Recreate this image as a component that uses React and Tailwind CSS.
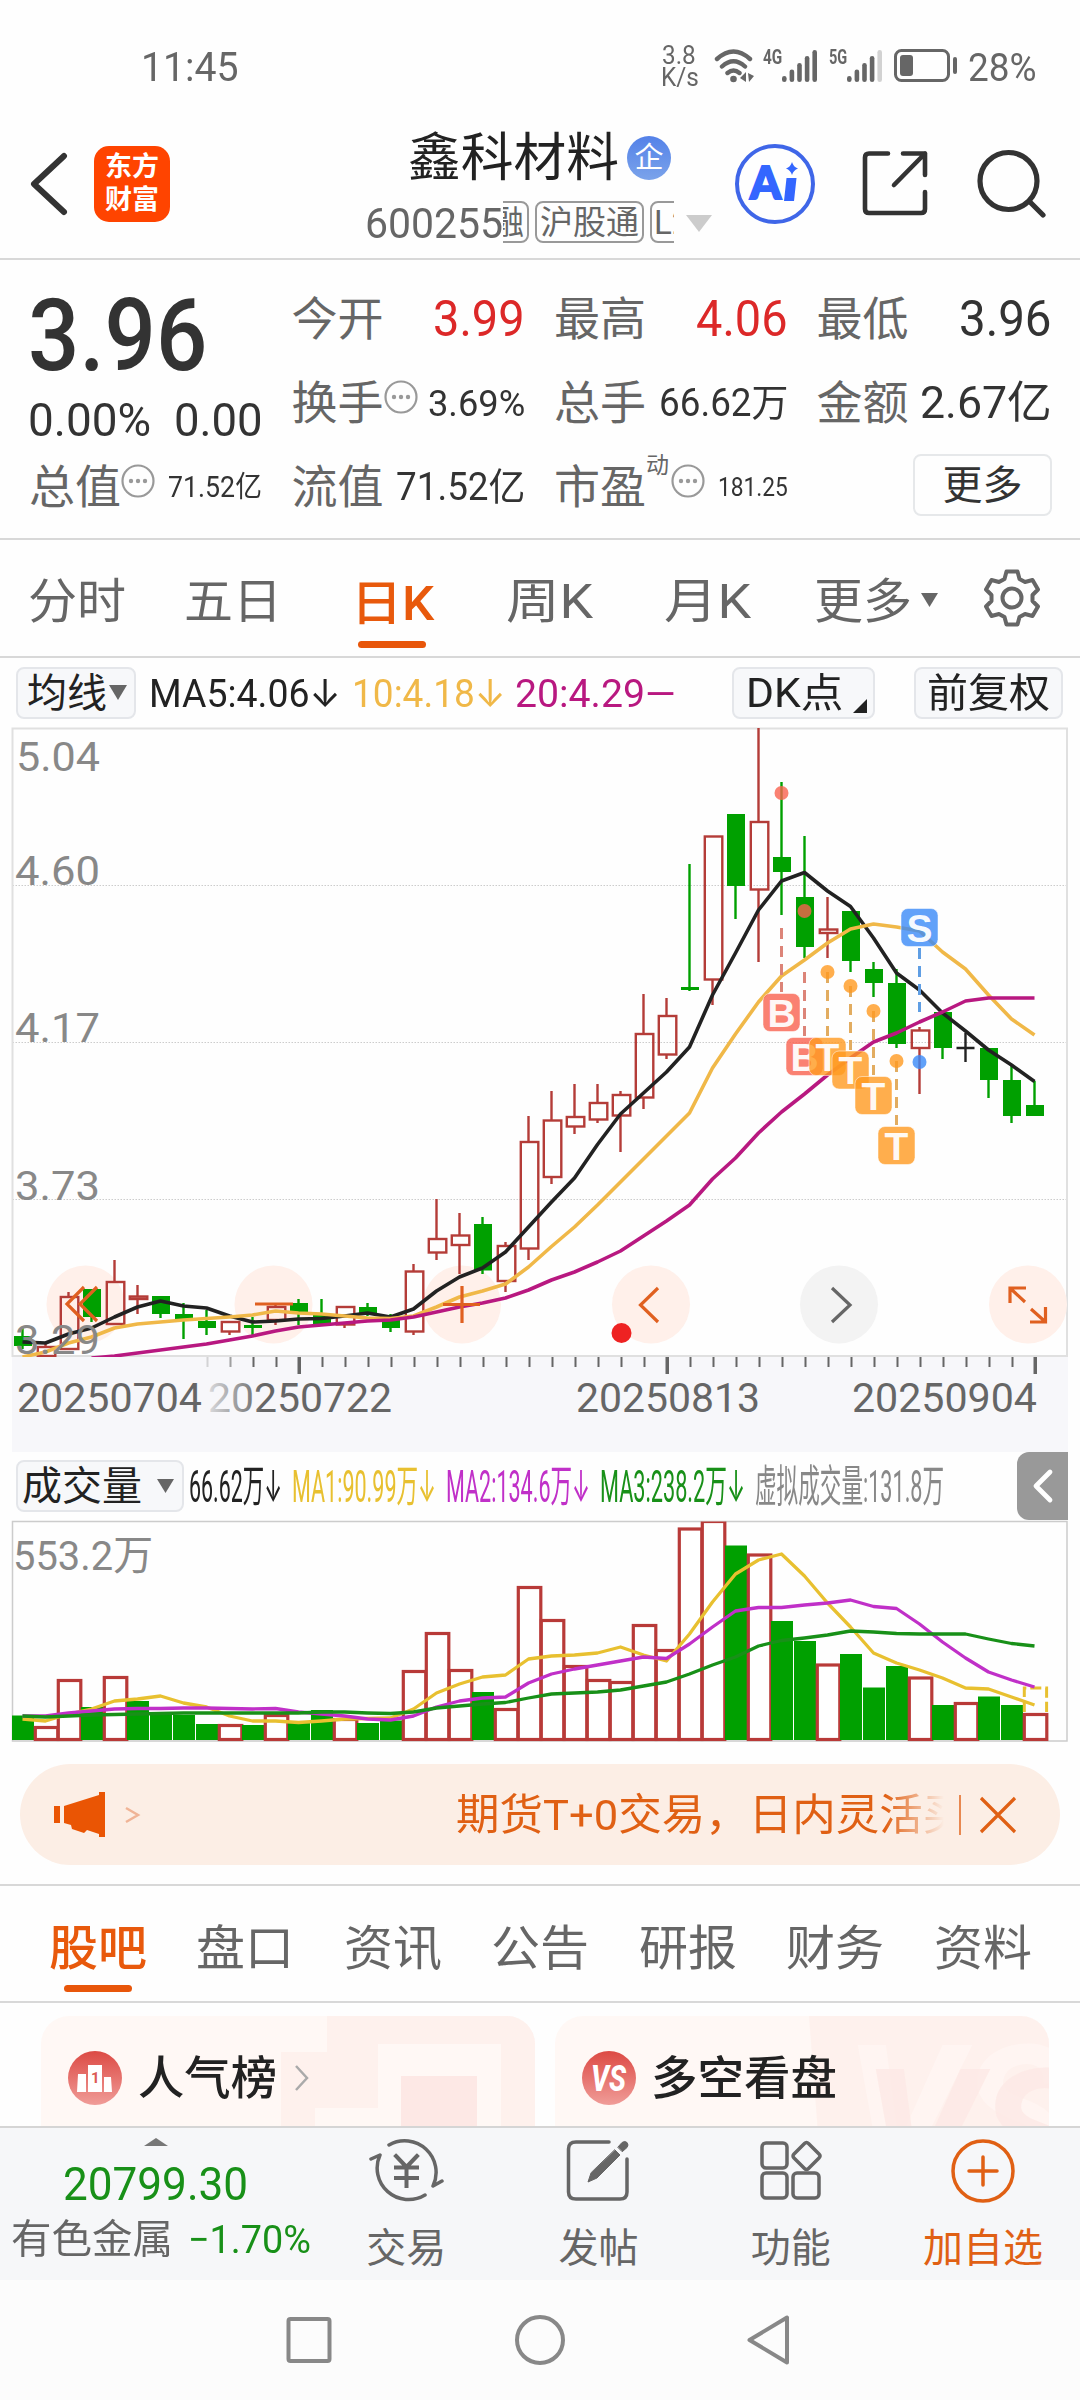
// src/App.jsx
import React from "react";

/* ====================== Data ====================== */
// [up|down|flat, body top, body bottom, high, low]
const CANDLES = [
  ["d", 1336, 1346, 1328, 1349], ["u", 1347, 1356, 1343, 1356], ["u", 1297, 1349, 1292, 1349],
  ["d", 1289, 1317, 1289, 1322], ["u", 1282, 1324, 1260, 1324], ["u", 1296.5, 1299, 1285, 1314],
  ["d", 1296, 1314, 1296, 1318], ["d", 1314, 1319, 1303, 1339], ["d", 1321, 1328, 1310, 1335],
  ["u", 1322, 1331.5, 1322, 1335], ["d", 1325, 1328, 1317, 1335], ["u", 1307, 1320, 1303, 1325],
  ["d", 1303, 1312, 1299, 1325], ["d", 1315, 1324, 1299, 1324], ["u", 1307, 1324.5, 1307, 1328],
  ["d", 1307, 1315, 1303, 1316], ["d", 1319, 1328, 1314, 1332], ["u", 1271.5, 1331.5, 1264, 1335],
  ["u", 1239, 1252.5, 1199, 1260], ["u", 1235.5, 1245, 1213, 1274], ["d", 1224, 1270.5, 1217, 1274],
  ["u", 1246, 1281, 1242, 1292], ["u", 1142, 1248.5, 1116, 1260], ["u", 1120.5, 1177, 1091, 1184],
  ["u", 1117, 1126.5, 1084, 1134], ["u", 1103, 1119.5, 1084, 1123], ["u", 1095, 1115.5, 1091, 1152],
  ["u", 1034, 1097.5, 994, 1109], ["u", 1016, 1054.5, 998, 1059], ["d", 987, 990, 864, 991],
  ["u", 836.5, 979.5, 836, 1005], ["d", 814, 886, 814, 919], ["u", 822, 889.5, 728, 962],
  ["d", 857, 872, 782, 915], ["d", 897, 947, 836, 958], ["u", 929.5, 933, 897, 958],
  ["d", 911, 961, 911, 972], ["d", 969, 983, 962, 997], ["d", 983, 1044, 969, 1048],
  ["u", 1030.5, 1048, 1027, 1094], ["d", 1012, 1048, 1012, 1059], ["f", 1047, 1049, 1033, 1062],
  ["d", 1048, 1080, 1048, 1098], ["d", 1080, 1116, 1066, 1123], ["d", 1105, 1116, 1081, 1116],
];

const MA5 = [1342, 1343, 1334, 1328, 1317, 1307, 1301, 1306, 1308, 1316, 1322, 1321, 1319, 1318.5, 1316, 1313, 1317, 1309, 1291, 1277, 1268, 1252, 1227, 1202, 1178, 1144.5, 1114, 1093, 1072, 1047, 995, 953, 910, 881, 872.5, 891, 906.5, 938, 973, 990, 1013, 1031, 1050, 1065, 1081.5];
const MA10 = [1357, 1352, 1343, 1337, 1328, 1324, 1322, 1320, 1318.5, 1317, 1315, 1311, 1313, 1314, 1316, 1318, 1318.5, 1316, 1307, 1297, 1291, 1284, 1267, 1246.5, 1227, 1205, 1182, 1159, 1136, 1113, 1068, 1034, 1002, 976, 960, 943, 929, 924, 927, 931, 952, 969, 995, 1019, 1035];
const MA20 = [1358, 1358, 1358, 1358, 1356, 1353, 1350, 1347, 1344, 1340, 1336, 1331, 1327, 1325, 1323, 1321, 1320, 1317, 1312, 1307, 1303, 1298, 1290, 1280, 1272, 1262, 1251, 1236, 1221, 1205, 1179, 1158, 1133, 1112, 1094, 1075, 1058, 1042, 1033, 1022, 1012, 1001, 998, 998, 998];

const VOLUMES = [
  ["d", 1715.5], ["u", 1726], ["u", 1679], ["d", 1707], ["u", 1676], ["d", 1701], ["d", 1715], ["d", 1715], ["d", 1724],
  ["u", 1724], ["d", 1725], ["u", 1714], ["d", 1723], ["d", 1710], ["u", 1718], ["d", 1723], ["d", 1720.5], ["u", 1670],
  ["u", 1632], ["u", 1669], ["d", 1692], ["u", 1708], ["u", 1586], ["u", 1619], ["u", 1665], ["u", 1679], ["u", 1681],
  ["u", 1624], ["u", 1649], ["u", 1527.5], ["u", 1520], ["d", 1545.5], ["u", 1553.5], ["d", 1621], ["d", 1641],
  ["u", 1663.5], ["d", 1654], ["d", 1687.5], ["d", 1666], ["u", 1676.5], ["d", 1705], ["u", 1702], ["d", 1696.5],
  ["d", 1705], ["u", 1713],
];
const VMA1 = [1719, 1721, 1714, 1709, 1701, 1699, 1696, 1703, 1707, 1716, 1721, 1721, 1722.5, 1721, 1719, 1718.5, 1718, 1709, 1693, 1684, 1677, 1675, 1659, 1656, 1655, 1653, 1647, 1655, 1661, 1634, 1602, 1574, 1560, 1554, 1576, 1603, 1627, 1653, 1663, 1670, 1678, 1688, 1689, 1697, 1705];
const VMA2 = [1716, 1716, 1713, 1711, 1709, 1708.5, 1708.5, 1708, 1708, 1708.5, 1709, 1708.5, 1712, 1714, 1716, 1719, 1720, 1716, 1707, 1701, 1698, 1697, 1683, 1674, 1669, 1665, 1661, 1657, 1658.5, 1644, 1627, 1611, 1607.5, 1607.5, 1605, 1603, 1600, 1606.5, 1608.5, 1624, 1642, 1658, 1672, 1680, 1687];
const VMA3 = [1716, 1717, 1716, 1715, 1714.5, 1714, 1713.5, 1713, 1713, 1713, 1713, 1713, 1713, 1712, 1712, 1713, 1713.5, 1712, 1708, 1706, 1704, 1702.5, 1698, 1694, 1693, 1692, 1690, 1686, 1682, 1674, 1665, 1657, 1646, 1640.5, 1638, 1635, 1631, 1632, 1633.5, 1634, 1634, 1634, 1639, 1643.5, 1646];

// trade markers: [label, x, box y, dot y, line start, line end, colour, line colour]
const MARKS = [
  ["B", 781.5, 1012.5, 793, 928, 992, "#f9624f", "#dc8478"],
  ["B", 804.5, 1056.5, 911, 972, 1036, "#f9624f", "#dc8478"],
  ["T", 827.5, 1056.5, 972, 972, 1036, "#ff9a20", "#e2ac60"],
  ["T", 850.5, 1070, 986, 986, 1050, "#ff9a20", "#e2ac60"],
  ["T", 873.5, 1095.5, 1011, 1011, 1075, "#ff9a20", "#e2ac60"],
  ["T", 896.5, 1145.5, 1061, 1061, 1125, "#ff9a20", "#e2ac60"],
  ["S", 919.5, 927.5, 1062, 948, 1012, "#3a8af8", "#5f9ee4"],
];

// round buttons over the chart: [x, gray, icon path]
const BUTTONS = [
  [85.5, false, "M84 1287L67 1304L84 1321M97 1287L80 1304L97 1321"],
  [273.5, false, "M255 1304H293"],
  [462, false, "M443 1304.5H480M462 1286V1323"],
  [651, false, "M658 1288L640.5 1305L658 1322"],
  [839, true, "M832 1288L850 1305L832 1322"],
  [1028, false, "M1010 1303V1288H1026M1010.5 1288.5L1025 1302M1030 1322H1045.5V1307M1045 1321.5L1031 1309"],
];

const BOARD_TABS = ["股吧", "盘口", "资讯", "公告", "研报", "财务", "资料"];

const cx = (i) => 22.5 + i * 23;
const line = (ys, from = 0) =>
  ys.slice(from).map((y, i) => `${cx(i + from)},${y}`).join(" ");

/* ====================== UI atoms ====================== */
// Squeezes or stretches one line of text to the given width
function Fit({ w, className = "", children }) {
  const ref = React.useRef(null);
  const [k, setK] = React.useState(1);
  React.useLayoutEffect(() => {
    if (ref.current?.offsetWidth) setK(w / ref.current.offsetWidth);
  }, [w, children]);
  return (
    <span className={`block shrink-0 whitespace-nowrap leading-none ${className}`} style={{ width: w }}>
      <span ref={ref} className="inline-block origin-left" style={{ transform: `scaleX(${k})` }}>
        {children}
      </span>
    </span>
  );
}

function Dots() {
  return (
    <svg width="34" height="34" viewBox="0 0 34 34" className="mb-3 shrink-0">
      <circle cx="17" cy="17" r="15.5" fill="none" stroke="#999" strokeWidth="2.2" />
      <circle cx="10" cy="17" r="2.2" fill="#999" />
      <circle cx="17" cy="17" r="2.2" fill="#999" />
      <circle cx="24" cy="17" r="2.2" fill="#999" />
    </svg>
  );
}

function Down({ w, h, className }) {
  return (
    <svg width={w} height={h} viewBox="0 0 20 16" preserveAspectRatio="none" className={className}>
      <path d="M0 0H20L10 16Z" fill="currentColor" />
    </svg>
  );
}

function Stat({ label, children }) {
  return (
    <div className="flex h-[84px] items-center text-[#333]">
      <span className="-ml-px shrink-0 text-[46px] leading-none text-[#666]">{label}</span>
      {children}
    </div>
  );
}

/* ====================== Top ====================== */
function Signal({ weak }) {
  return (
    <svg width="36" height="34" viewBox="0 0 36 34" className="shrink-0">
      {[27, 20.5, 14, 7, 1].map((y, i) => (
        <rect key={i} x={i * 7.6} y={y} width="4.6" height={33 - y} rx="2.3" fill={weak && i === 4 ? "#d2d2d2" : "#666"} />
      ))}
    </svg>
  );
}

function StatusBar() {
  return (
    <div className="flex h-[105px] items-center pl-[141px] pt-[27px] text-[#666]">
      <Fit w={98} className="mt-[3px] text-[40px]">11:45</Fit>
      <div className="ml-[422px] mt-[-3px] flex w-[40px] flex-col text-[25px]">
        <Fit w={34} className="ml-px h-[22px]">3.8</Fit>
        <Fit w={38} className="h-[22px]">K/s</Fit>
      </div>
      <svg width="42" height="36" viewBox="0 0 42 36" className="ml-[13px] shrink-0" fill="none" stroke="#666" strokeWidth="4.4" strokeLinecap="round">
        <path d="M3 11Q19.500 -4 36 11M8 18.500Q19.500 8 31 18.500M13.500 25Q19.500 20 25.500 25" />
        <circle cx="19.500" cy="31" r="3.300" fill="#666" stroke="none" />
        <path d="M32 24V34L26 30ZM34 25L40 28L35 34Z" fill="#666" stroke="none" />
      </svg>
      <Fit w={19} className="ml-[7px] mt-[-17px] text-[21px] font-bold">4G</Fit>
      <Signal />
      <Fit w={18} className="ml-[11px] mt-[-17px] text-[21px] font-bold">5G</Fit>
      <Signal weak />
      <svg width="64" height="34" viewBox="0 0 64 34" className="ml-[11px] shrink-0" fill="none">
        <rect x="1.500" y="1.500" width="53" height="30" rx="6" stroke="#666" strokeWidth="3" />
        <rect x="6" y="6" width="13" height="21" rx="3" fill="#666" />
        <rect x="59" y="8" width="4" height="17" rx="2" fill="#666" />
      </svg>
      <Fit w={69} className="ml-[10px] mt-[3px] text-[38px]">28%</Fit>
    </div>
  );
}

function Header() {
  return (
    <div className="flex h-[155px] border-b-2 border-[#d8d8d8]">
      <svg width="40" height="64" viewBox="0 0 40 64" className="ml-[29px] mt-[47px] shrink-0">
        <path d="M35 4L5 32L35 60" fill="none" stroke="#333" strokeWidth="6" strokeLinecap="round" strokeLinejoin="round" />
      </svg>
      <div className="ml-[25px] mt-[41px] flex h-[76px] w-[76px] shrink-0 flex-col items-center justify-center rounded-[15px] bg-[#ff4400] text-[27px] font-bold leading-[33px] text-white">
        <span>东方</span>
        <span>财富</span>
      </div>
      <div className="ml-[195px] w-[350px] shrink-0">
        <div className="ml-[43px] mt-[26px] flex items-center">
          <Fit w={211} className="pt-[2px] text-[52px] text-[#222]">鑫科材料</Fit>
          <span className="ml-[8px] flex h-[44px] w-[44px] items-center justify-center rounded-full bg-linear-to-b from-[#5481e8] to-[#7ba3ea] text-[29px] leading-none text-white">企</span>
        </div>
        <div className="mt-[16px] flex h-[42px] items-center text-[#666]">
          <Fit w={138} className="mt-[3px] text-[43px]">600255</Fit>
          <div className="flex h-[42px] w-[171px] shrink-0 overflow-hidden text-[33px] leading-[40px]">
            <span className="-ml-[24px] shrink-0 rounded-[8px] border-2 border-[#999] pl-[10px] pr-[3px]">融</span>
            <span className="ml-[6px] shrink-0 rounded-[8px] border-2 border-[#999] px-[3px]">沪股通</span>
            <span className="ml-[6px] shrink-0 rounded-[8px] border-2 border-[#999] px-[2px]">L2</span>
          </div>
          <Down w={26} h={17} className="ml-[12px] mt-[2px] text-[#ccc]" />
        </div>
      </div>
      <svg width="82" height="82" viewBox="0 0 82 82" className="ml-[19px] mt-[38px] shrink-0">
        <circle cx="41" cy="41" r="38" fill="none" stroke="#3f66e8" strokeWidth="4" />
        <text x="16" y="56" fontSize="45" fontWeight="900" fill="#3366ff" stroke="#3366ff" strokeWidth="2" fontFamily="Lato, Roboto, sans-serif" textLength="31" lengthAdjust="spacingAndGlyphs">A</text>
        <path d="M52.500 35H62.500L60 58H50ZM58 19Q59.500 24 64 25.500Q59.500 27 58 32Q56.500 27 52 25.500Q56.500 24 58 19Z" fill="#3366ff" />
      </svg>
      <svg width="68" height="68" viewBox="0 0 68 68" className="ml-[45px] mt-[45px] shrink-0" fill="none" stroke="#333" strokeWidth="4.600" strokeLinecap="round" strokeLinejoin="round">
        <path d="M27 3.500H8Q4 3.500 4 7.500V59Q4 63 8 63H60Q64 63 64 59V42M42 3.500H64V25M64 3.500L33 35" />
      </svg>
      <svg width="70" height="70" viewBox="0 0 70 70" className="ml-[47px] mt-[43px] shrink-0" fill="none" stroke="#333" strokeWidth="5.200" strokeLinecap="round">
        <circle cx="32.500" cy="33" r="28.500" />
        <path d="M54 54L67 67" />
      </svg>
    </div>
  );
}

function Quote() {
  return (
    <div className="grid h-[280px] grid-cols-4 gap-x-[30px] border-b-2 border-[#d8d8d8] px-[30px] pt-[17px]">
      <div className="text-[#333]">
        <Fit w={179} className="-ml-[2px] pt-[9px] text-[100px] font-medium">3.96</Fit>
        <div className="mb-[2px] -ml-[2px] flex h-[57px] items-end gap-[23px] text-[47px]">
          <Fit w={123}>0.00%</Fit>
          <Fit w={89}>0.00</Fit>
        </div>
        <Stat label="总值">
          <Dots />
          <Fit w={94} className="ml-[13px] text-[29px]">71.52亿</Fit>
        </Stat>
      </div>
      <div>
        <Stat label="今开"><Fit w={92} className="ml-auto text-[50px] text-[#dc2828]">3.99</Fit></Stat>
        <Stat label="换手"><Dots /><Fit w={97} className="ml-auto text-[37px]">3.69%</Fit></Stat>
        <Stat label="流值"><Fit w={129} className="ml-auto text-[38px]">71.52亿</Fit></Stat>
      </div>
      <div>
        <Stat label="最高"><Fit w={92} className="ml-auto text-[50px] text-[#dc2828]">4.06</Fit></Stat>
        <Stat label="总手"><Fit w={129} className="ml-auto text-[38px]">66.62万</Fit></Stat>
        <Stat label="市盈">
          <span className="mb-[44px] w-[25px] text-[23px] leading-none text-[#666]">动</span>
          <Dots />
          <Fit w={70} className="ml-auto text-[25px]">181.25</Fit>
        </Stat>
      </div>
      <div className="-mr-[2px]">
        <Stat label="最低"><Fit w={93} className="ml-auto text-[50px]">3.96</Fit></Stat>
        <Stat label="金额"><Fit w={132} className="ml-auto text-[44px]">2.67亿</Fit></Stat>
        <div className="flex h-[84px] items-center justify-end pb-[4px]">
          <span className="flex h-[62px] w-[139px] items-center justify-center rounded-[8px] border-2 border-[#e6e8ea] pt-[2px] text-[40px] leading-none text-[#333]">更多</span>
        </div>
      </div>
    </div>
  );
}

function PeriodTabs() {
  return (
    <div className="flex h-[118px] items-center border-b-2 border-[#d8d8d8] pl-[28px] pt-[8px] text-[48px] text-[#666]">
      <Fit w={98}>分时</Fit>
      <Fit w={98} className="ml-[58px]">五日</Fit>
      <div className="ml-[69px] flex h-full flex-col items-center pt-[32px] text-[#e8590c]">
        <Fit w={83} className="font-medium">日K</Fit>
        <span className="mt-[13px] mr-[2px] h-[7px] w-[68px] rounded-full bg-[#e8560a]" />
      </div>
      <Fit w={87} className="ml-[72px]">周K</Fit>
      <Fit w={87} className="ml-[71px]">月K</Fit>
      <Fit w={98} className="ml-[63px]">更多</Fit>
      <Down w={17} h={14} className="mt-[-4px] ml-[9px] text-[#666]" />
      <svg width="60" height="60" viewBox="0 0 60 60" className="ml-[44px] mt-[-8px] shrink-0" fill="none" stroke="#666" strokeWidth="4" strokeLinejoin="round">
        <path d="M24.500 3.500H35.500L37.500 11L43 14L50.500 12L56 21.500L50.500 27V33L56 38.500L50.500 48L43 46L37.500 49L35.500 56.500H24.500L22.500 49L17 46L9.500 48L4 38.500L9.500 33V27L4 21.500L9.500 12L17 14L22.500 11Z" />
        <circle cx="30" cy="30" r="9.500" />
      </svg>
    </div>
  );
}

function Chip({ className, children }) {
  return (
    <div className={`flex shrink-0 items-center rounded-[8px] border-2 border-[#e4e6ea] bg-[#f7f8fa] text-[#222] ${className}`}>
      {children}
    </div>
  );
}

function MaRow() {
  return (
    <div className="flex h-[69px] items-center pl-[16px] text-[38px]">
      <Chip className="h-[52px] w-[120px] pl-[9px] text-[40px]">
        <Fit w={80} className="pt-[2px]">均线</Fit>
        <Down w={18} h={15} className="ml-[2px] text-[#666]" />
      </Chip>
      <Fit w={192} className="ml-[13px] pt-[2px] text-[#222]">MA5:4.06↓</Fit>
      <Fit w={154} className="ml-[11px] pt-[2px] text-[#f0b848]">10:4.18↓</Fit>
      <Fit w={161} className="ml-[9px] pt-[2px] text-[#b81880]">20:4.29—</Fit>
      <Chip className="ml-[56px] h-[52px] w-[143px] pl-[12px] text-[40px]">
        <Fit w={97} className="pt-[2px]">DK点</Fit>
        <svg width="14" height="14" viewBox="0 0 13 13" className="ml-[10px] mt-[26px]"><path d="M13 0V13H0Z" fill="#222" /></svg>
      </Chip>
      <Chip className="ml-[39px] h-[52px] w-[149px] justify-center text-[40px]">
        <Fit w={123} className="pt-[2px]">前复权</Fit>
      </Chip>
    </div>
  );
}

/* ====================== Charts ====================== */
function Candle({ i, row }) {
  const [kind, top, bottom, high, low] = row;
  const x = cx(i);
  if (kind === "f") {
    return <path d={`M${x} ${high}V${low}M${x - 9} ${top + 1}H${x + 9}`} stroke="#222" strokeWidth="2.4" />;
  }
  if (kind === "d") {
    return (
      <g fill="#00a000">
        <rect x={x - 1.2} y={high} width="2.4" height={low - high} />
        <rect x={x - 8.5} y={top} width="18" height={bottom - top} />
      </g>
    );
  }
  return (
    <g fill="none" stroke="#b43c38" strokeWidth="2.4">
      <path d={`M${x} ${high}V${top}M${x} ${bottom}V${low}`} />
      <rect x={x - 7.7} y={top} width="17.5" height={bottom - top} />
    </g>
  );
}

function KChart() {
  return (
    <svg width="1080" height="725" viewBox="0 727 1080 725" className="block shrink-0">
      <defs>
        <clipPath id="plot"><rect x="9" y="728" width="1058" height="629" /></clipPath>
        <linearGradient id="fade" gradientUnits="userSpaceOnUse" x1="205" x2="262" y1="0" y2="0">
          <stop offset="0" stopColor="#666" stopOpacity="0.15" />
          <stop offset="1" stopColor="#666" />
        </linearGradient>
      </defs>
      <rect x="12" y="1357" width="1056" height="95" fill="#f7f7fa" />
      <path d="M12.500 885.500H1067M12.500 1042.500H1067M12.500 1199.500H1067" stroke="#ccc" strokeWidth="1" strokeDasharray="1.500 1.500" />
      <path d="M12.500 1356V728.500H1067V1356Z" fill="none" stroke="#e0e0e0" strokeWidth="2" />
      <g clipPath="url(#plot)">
        {BUTTONS.map(([x, gray]) => (
          <circle key={x} cx={x} cy="1304.500" r="39" fill={gray ? "#f3f3f3" : "#fff0ea"} />
        ))}
        {CANDLES.map((row, i) => <Candle key={i} i={i} row={row} />)}
        <g fill="none" strokeWidth="3.600" strokeLinejoin="round">
          <polyline points={line(MA5)} stroke="#222" />
          <polyline points={line(MA10)} stroke="#f0b848" />
          <polyline points={line(MA20, 3)} stroke="#b81880" />
        </g>
        {BUTTONS.map(([x, gray, d]) => (
          <path key={x} d={d} fill="none" stroke={gray ? "#666" : "#e06020"} strokeWidth="3.200" />
        ))}
      </g>
      <circle cx="621.500" cy="1333" r="10" fill="#ee2222" />
      {MARKS.map(([t, x, y, dot, y1, y2, color, dash], i) => (
        <g key={i}>
          <path d={`M${x} ${y1}V${y2}`} stroke={dash} strokeWidth="3" strokeDasharray="11 7" />
          <circle cx={x} cy={dot} r="7" fill={color} fillOpacity="0.8" />
          <rect x={x - 18.5} y={y - 19} width="37" height="38" rx="7" fill={color} fillOpacity="0.8" stroke="#fff" strokeOpacity="0.5" />
          <text x={x} y={y + 14} fontSize="39" fontWeight="700" textAnchor="middle" fill="#fff" fillOpacity="0.95" fontFamily="Liberation Sans, sans-serif">{t}</text>
        </g>
      ))}
      <g fill="#888" fontSize="41">
        <text x="16" y="771" textLength="84" lengthAdjust="spacingAndGlyphs">5.04</text>
        <text x="15" y="885" textLength="85" lengthAdjust="spacingAndGlyphs">4.60</text>
        <text x="15" y="1042" textLength="85" lengthAdjust="spacingAndGlyphs">4.17</text>
        <text x="15" y="1200" textLength="85" lengthAdjust="spacingAndGlyphs">3.73</text>
        <text x="15" y="1354" textLength="85" lengthAdjust="spacingAndGlyphs">3.29</text>
      </g>
      {CANDLES.map((_, i) => {
        if (i < 8) return null;
        const big = i === 12 || i === 28 || i === 44;
        return (
          <rect key={i} x={cx(i) + (big ? -1 : 0)} y="1357" width={big ? 3.5 : 2} height={big ? 17 : 10} fill="#666" fillOpacity={i === 8 ? 0.25 : i === 9 ? 0.6 : 1} />
        );
      })}
      <g fill="#666" fontSize="41">
        <text x="17" y="1412" textLength="185" lengthAdjust="spacingAndGlyphs">20250704</text>
        <text x="208" y="1412" textLength="184" lengthAdjust="spacingAndGlyphs" fill="url(#fade)">20250722</text>
        <text x="576" y="1412" textLength="184" lengthAdjust="spacingAndGlyphs">20250813</text>
        <text x="852" y="1412" textLength="185" lengthAdjust="spacingAndGlyphs">20250904</text>
      </g>
    </svg>
  );
}

function VolumeRow() {
  return (
    <div className="flex h-[68px] shrink-0 items-center pl-[16px] pr-[12px] text-[44px]">
      <Chip className="h-[52px] w-[168px] pl-[4px] text-[40px]">
        <Fit w={120} className="pt-[2px]">成交量</Fit>
        <Down w={17} h={14} className="ml-[15px] text-[#666]" />
      </Chip>
      <Fit w={93} className="ml-[5px] pt-[2px] text-[#222]">66.62万↓</Fit>
      <Fit w={144} className="ml-[10px] pt-[2px] text-[#e8c030]">MA1:90.99万↓</Fit>
      <Fit w={144} className="ml-[10px] pt-[2px] text-[#c030c8]">MA2:134.6万↓</Fit>
      <Fit w={145} className="ml-[10px] pt-[2px] text-[#189018]">MA3:238.2万↓</Fit>
      <Fit w={189} className="ml-[10px] pt-[2px] text-[#888]">虚拟成交量:131.8万</Fit>
      <div className="ml-auto flex h-full w-[51px] items-center justify-center rounded-l-[12px] bg-[#999]">
        <svg width="22" height="36" viewBox="0 0 22 34"><path d="M18 3L4 17L18 31" fill="none" stroke="#fff" strokeWidth="4.800" strokeLinecap="round" strokeLinejoin="round" /></svg>
      </div>
    </div>
  );
}

function VolumeChart() {
  return (
    <svg width="1080" height="224" viewBox="0 1520 1080 224" className="block shrink-0">
      <defs>
        <clipPath id="vol"><rect x="12" y="1521.500" width="1055" height="220" /></clipPath>
      </defs>
      <path d="M12.500 1521.500H1067V1741H12.500Z" fill="none" stroke="#ccc" strokeWidth="1.500" />
      <g clipPath="url(#vol)">
        {VOLUMES.map(([kind, y], i) =>
          kind === "d" ? (
            <rect key={i} x={cx(i) - 10.5} y={y} width="22" height={1740 - y} fill="#00a000" />
          ) : (
            <rect key={i} x={cx(i) - 10.2} y={y + 1.5} width="22.500" height={1738 - y} fill="#fff" stroke="#b83a38" strokeWidth="3.200" />
          )
        )}
        <path d="M1024.300 1712V1688H1046.600V1712" fill="none" stroke="#e8c030" strokeWidth="3" strokeDasharray="11 4" />
        <g fill="none" strokeWidth="3.300" strokeLinejoin="round">
          <polyline points={line(VMA1)} stroke="#e8c030" />
          <polyline points={line(VMA2)} stroke="#c030c8" />
          <polyline points={line(VMA3)} stroke="#189018" />
        </g>
      </g>
      <text x="13" y="1570" fontSize="41" fill="#888" textLength="140" lengthAdjust="spacingAndGlyphs">553.2万</text>
    </svg>
  );
}

/* ====================== Lower part ====================== */
function Banner() {
  return (
    <div className="mx-[20px] mt-[20px] flex h-[101px] shrink-0 items-center rounded-full bg-[#fceee5] pl-[33px] text-[#e06014]">
      <svg width="54" height="48" viewBox="0 0 54 48" className="shrink-0" fill="#ea5504">
        <path d="M1 15H7V32H1ZM11 15L46 4V1H52V46H46V43L34 39L31 42L19 38L18 34L11 32Z" />
      </svg>
      <svg width="18" height="18" viewBox="0 0 18 18" className="ml-[17px] shrink-0">
        <path d="M2 2L14 9L2 16" fill="none" stroke="#f0b496" strokeWidth="2.500" />
      </svg>
      <div className="ml-[314px] w-[488px] shrink-0 overflow-hidden mask-r-from-88% mask-r-to-100%">
        <Fit w={510} className="pt-[2px] text-[43px]">期货T+0交易，日内灵活买</Fit>
      </div>
      <span className="ml-[15px] h-[40px] w-[2px] bg-[#e88850]" />
      <svg width="38" height="38" viewBox="0 0 38 38" className="ml-[18px] shrink-0">
        <path d="M2 2L36 36M36 2L2 36" stroke="#e06014" strokeWidth="3.200" />
      </svg>
    </div>
  );
}

function BoardTabs() {
  return (
    <div className="mt-[19px] flex h-[119px] shrink-0 border-y-2 border-[#d8d8d8] pl-[24px] text-[48px] text-[#666]">
      {BOARD_TABS.map((t, i) => (
        <div key={t} className={`flex w-[147.500px] flex-col items-center pt-[39px] ${i === 0 ? "font-medium text-[#e8590c]" : ""}`}>
          <Fit w={98}>{t}</Fit>
          {i === 0 && <span className="mt-[12px] h-[7px] w-[68px] rounded-full bg-[#e8560a]" />}
        </div>
      ))}
    </div>
  );
}

function Cards() {
  return (
    <div className="flex h-[123px] shrink-0 gap-[20px] overflow-hidden pl-[41px] pt-[13px]">
      <div className="relative flex h-[124px] w-[494px] shrink-0 items-center overflow-hidden rounded-t-[28px] bg-[#fff8f5] pl-[27px]">
        <svg width="254" height="130" viewBox="0 0 254 130" className="absolute right-0 top-0">
          <path d="M46 0H254V130H220V28H97V92H34V130H0V36H46Z" fill="#fdece8" fillOpacity="0.65" />
          <rect x="120" y="60" width="76" height="70" fill="#fde8e5" />
        </svg>
        <svg width="54" height="54" viewBox="0 0 54 54" className="relative shrink-0">
          <defs><linearGradient id="badge" x1="0" y1="0" x2="0" y2="1"><stop stopColor="#dc4a44" /><stop offset="1" stopColor="#f09c98" /></linearGradient></defs>
          <circle cx="27" cy="27" r="27" fill="url(#badge)" />
          <path d="M10 23H18V41H9ZM20 14H34V41H20ZM36 26H43L44 41H36Z" fill="#fff" />
          <text x="23" y="32" fontSize="15" fontWeight="700" fill="#dc5a54">1</text>
        </svg>
        <Fit w={139} className="relative ml-[16px] text-[46px] font-medium text-[#222]">人气榜</Fit>
        <svg width="16" height="28" viewBox="0 0 16 28" className="relative ml-[17px]"><path d="M2 2L13 14L2 26" fill="none" stroke="#aaa" strokeWidth="2.500" /></svg>
      </div>
      <div className="relative flex h-[124px] w-[494px] shrink-0 items-center overflow-hidden rounded-t-[28px] bg-[#fff8f5] pl-[27px]">
        <svg width="240" height="130" viewBox="0 0 240 130" className="absolute right-0 top-0">
          <path d="M0 0H240V130H10Z" fill="#fdece8" fillOpacity="0.6" />
          <text x="36" y="158" fontSize="182" fontWeight="700" fontStyle="italic" fontFamily="Roboto, sans-serif" fill="#fff5f2">VS</text>
          <text x="54" y="182" fontSize="182" fontWeight="700" fontStyle="italic" fontFamily="Roboto, sans-serif" fill="#fde8e5" fillOpacity="0.8">VS</text>
        </svg>
        <svg width="54" height="54" viewBox="0 0 54 54" className="relative shrink-0">
          <circle cx="27" cy="27" r="27" fill="url(#badge)" />
          <text x="9" y="40" fontSize="37" fontWeight="800" fontStyle="italic" fill="#fff" textLength="35" lengthAdjust="spacingAndGlyphs" fontFamily="Roboto, sans-serif">VS</text>
        </svg>
        <Fit w={186} className="relative ml-[15px] text-[46px] font-medium text-[#222]">多空看盘</Fit>
      </div>
    </div>
  );
}

function Action({ label, active, children }) {
  return (
    <div className={`flex w-[192.300px] flex-col items-center pt-[8px] text-[40px] leading-none ${active ? "text-[#e06014]" : "text-[#666]"}`}>
      <svg width="76" height="72" viewBox="0 0 76 72" fill="none" stroke="currentColor" strokeWidth="3.500" strokeLinecap="round" strokeLinejoin="round">
        {children}
      </svg>
      <span className="mt-[21px]">{label}</span>
    </div>
  );
}

function BottomBar() {
  return (
    <div className="flex h-[154px] shrink-0 border-t-2 border-[#d5d5d5] bg-[#f6f7f9]">
      <div className="w-[310px] shrink-0 pt-[10px] text-[#189018]">
        <svg width="24" height="8" viewBox="0 0 24 8" className="ml-[144px] block"><path d="M0 8L12 0L24 8Z" fill="#777" /></svg>
        <Fit w={185} className="ml-[63px] mt-[15px] text-[46px]">20799.30</Fit>
        <div className="mt-[13px] flex items-center">
          <Fit w={162} className="ml-[11px] text-[40px] text-[#666]">有色金属</Fit>
          <Fit w={123} className="ml-[15px] text-[39px]">−1.70%</Fit>
        </div>
      </div>
      <Action label="交易">
        <path d="M21 9A31.500 31.500 0 0 1 65 50L74 45M57 59A31.500 31.500 0 0 1 12 19L3 23" />
        <path d="M28 20L38.500 31L49 20M28 31.500H49M28 42H49M38.500 31V50" strokeWidth="4" strokeLinecap="square" />
      </Action>
      <Action label="发帖">
        <path d="M49 6H16Q8.500 6 8.500 13V56Q8.500 63 16 63H60Q67 63 67 56V23" />
        <path d="M55 14L60 19L37 42L28 46L31 37ZM58 11L62 6.500Q65 4.500 67 6.500Q69 9 67 11.500L62.500 15.500Z" fill="currentColor" strokeWidth="1" />
      </Action>
      <Action label="功能">
        <rect x="9" y="7" width="25" height="25" rx="4" />
        <rect x="9" y="37" width="25" height="25" rx="4" />
        <rect x="40" y="37" width="26" height="25" rx="4" />
        <path d="M51.500 7.500Q53.500 5.500 55.500 7.500L66 18Q68 20 66 22L55.500 32.500Q53.500 34.500 51.500 32.500L41 22Q39 20 41 18Z" />
      </Action>
      <Action label="加自选" active>
        <circle cx="38" cy="35" r="30" />
        <path d="M24 35H52M38 21V49" />
      </Action>
    </div>
  );
}

function NavBar() {
  return (
    <div className="flex h-[120px] shrink-0 items-center bg-[#fcfcfc]">
      <svg width="1080" height="54" viewBox="0 0 1080 54" fill="none" stroke="#888" strokeWidth="4" strokeLinejoin="round">
        <rect x="288.500" y="6" width="41" height="42" rx="2" />
        <circle cx="540" cy="27" r="23" />
        <path d="M787 4.500V49.500L749.500 27Z" />
      </svg>
    </div>
  );
}

export default function App() {
  return (
    <div className="flex h-[2400px] w-[1080px] flex-col overflow-hidden bg-[#fefefe] font-[Roboto,Inter,'Noto_Sans_CJK_SC',sans-serif]">
      <StatusBar />
      <Header />
      <Quote />
      <PeriodTabs />
      <MaRow />
      <KChart />
      <VolumeRow />
      <VolumeChart />
      <Banner />
      <BoardTabs />
      <Cards />
      <BottomBar />
      <NavBar />
    </div>
  );
}
